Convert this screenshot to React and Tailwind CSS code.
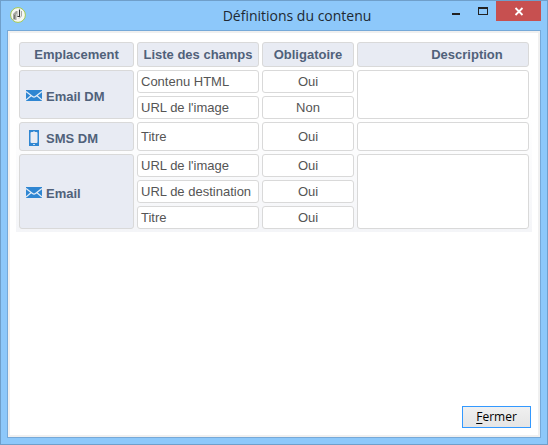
const groups = [
  {
    name: 'Email DM',
    icon: 'mail',
    fields: [
      ['Contenu HTML', 'Oui'],
      ['URL de l\'image', 'Non'],
    ],
  },
  { name: 'SMS DM', icon: 'phone', fields: [['Titre', 'Oui']] },
  {
    name: 'Email',
    icon: 'mail',
    fields: [
      ['URL de l\'image', 'Oui'],
      ['URL de destination', 'Oui'],
      ['Titre', 'Oui'],
    ],
  },
];

function MailIcon() {
  return (
    <svg className="mb-0.5 block h-[11px] w-4 shrink-0" viewBox="0 0 16 11" aria-hidden="true">
      <rect width="16" height="11" fill="#2f86d2" />
      <path d="M0 1.5 L6.5 6.6 Q8 7.8 9.5 6.6 L16 1.5 M0 10 L5 5.8 M16 10 L11 5.8" fill="none" stroke="#e3edf8" strokeWidth="1.3" />
    </svg>
  );
}

function PhoneIcon() {
  return (
    <svg className="mb-0.5 block h-4 w-4 shrink-0" viewBox="0 0 16 16" aria-hidden="true">
      <rect x="3" width="10" height="16" fill="#2f86d2" />
      <rect x="4.5" y="2" width="7" height="11" rx="1" fill="#e8ebf3" />
      <rect x="7" y="1" width="2" height="1" fill="#8fbce6" />
      <rect x="7" y="14" width="2" height="1" fill="#c5dcf2" />
    </svg>
  );
}

function AppIcon() {
  return (
    <svg className="block h-4 w-4" viewBox="0 0 16 16" aria-hidden="true">
      <circle cx="8" cy="8" r="7.4" fill="#f6f7f4" stroke="#a3c94f" strokeWidth="1" />
      <path d="M3 7 L6 4 H8 V6 L6.5 7 V13 L3 12.5 Z" fill="#a2a49f" />
      <path d="M4 8 H5 V12 H4 Z" fill="#777975" />
      <path d="M7 4 H8 V10 H7 Z" fill="#c9cac6" />
      <path d="M9.5 2.5 V9.5 M7.5 9.5 H10" fill="none" stroke="#333" strokeWidth="1.1" />
      <path d="M11.5 4 V9 L9 11.5" fill="none" stroke="#a9aba6" strokeWidth="1" />
    </svg>
  );
}

const head = 'h-[25px] rounded-[3px] border border-[#d9d9d9] bg-[#e8ebf3] p-0 text-center font-bold text-[#50617a]';
const cell = 'rounded-[3px] border border-[#d9d9d9] bg-white py-0';

export default function App() {
  return (
    <div className="flex h-screen flex-col border border-[#6f9fca] bg-[#8dc8fa] px-1.5 pb-1.5 font-['Liberation_Sans',Arial,sans-serif]">
      <header className="grid h-[29px] shrink-0 grid-cols-[1fr_auto_1fr] items-start">
        <div className="pt-1.5 pl-[3px]">
          <AppIcon />
        </div>
        <h1 className="pt-1 pl-[46px] font-['Open_Sans','Noto_Sans',sans-serif] text-[14px] leading-[22px] text-[#202832]">
          Définitions du contenu
        </h1>
        <div className="flex justify-end">
          <button type="button" aria-label="Réduire" className="h-5 w-[26px]">
            <svg className="h-5 w-[26px]" viewBox="0 0 26 20" aria-hidden="true">
              <rect x="8" y="12" width="8" height="2" fill="#222" />
            </svg>
          </button>
          <button type="button" aria-label="Agrandir" className="h-5 w-[26px]">
            <svg className="h-5 w-[26px]" viewBox="0 0 26 20" aria-hidden="true">
              <path d="M8 6 H18 V14 H8 Z M9 8 V13 H17 V8 Z" fill="#222" fillRule="evenodd" />
            </svg>
          </button>
          <button type="button" aria-label="Fermer la fenêtre" className="h-5 w-[45px] bg-[#c75050]">
            <svg className="h-5 w-[45px]" viewBox="0 0 45 20" aria-hidden="true">
              <path d="M19.5 7 L26.5 14 M26.5 7 L19.5 14" stroke="#fff" strokeWidth="1.8" />
            </svg>
          </button>
        </div>
      </header>

      <main className="flex min-h-0 flex-1 flex-col border border-[#76a9d8] bg-white">
        <div className="flex min-h-0 flex-1 flex-col justify-between border-2 border-[#f0f0f0] p-1.5">
          <table className="w-full table-fixed border-separate border-spacing-[3px] bg-linear-to-b from-white from-40% to-[#f4f5f8] text-[13px] leading-4 text-[#555]">
            <colgroup>
              <col className="w-[115px]" />
              <col className="w-[122px]" />
              <col className="w-[92px]" />
              <col />
            </colgroup>
            <thead>
              <tr>
                <th scope="col" className={head}>Emplacement</th>
                <th scope="col" className={head}>Liste des champs</th>
                <th scope="col" className={head}>Obligatoire</th>
                <th scope="col" className="h-[25px] rounded-[3px] border border-[#d9d9d9] bg-[#e8ebf3] py-0 pr-0 pl-12 text-center font-bold text-[#50617a]">
                  Description
                </th>
              </tr>
            </thead>
            <tbody>
              {groups.map((group) =>
                group.fields.map(([field, required], i) => (
                  <tr key={group.name + field} className={group.icon === 'phone' ? 'h-[29px]' : 'h-[23px]'}>
                    {i === 0 && (
                      <th
                        scope="rowgroup"
                        rowSpan={group.fields.length}
                        className="rounded-[3px] border border-[#d9d9d9] bg-[#e8ebf3] py-0 pr-0 pl-1.5 text-left font-bold text-[#50617a]"
                      >
                        <span className="flex items-center gap-1 pt-1">
                          {group.icon === 'mail' ? <MailIcon /> : <PhoneIcon />}
                          {group.name}
                        </span>
                      </th>
                    )}
                    <td className={cell + ' pl-[3px] whitespace-nowrap'}>{field}</td>
                    <td className={cell + ' px-0 text-center'}>{required}</td>
                    {i === 0 && <td rowSpan={group.fields.length} className={cell} />}
                  </tr>
                )),
              )}
            </tbody>
          </table>
          <footer className="flex justify-end pr-px pb-px">
            <button
              type="button"
              className="h-[22px] w-[69px] border border-[#3399ff] bg-linear-to-b from-[#f0f0f0] to-[#e5e5e5] font-['Open_Sans','Noto_Sans',sans-serif] text-[12px] leading-4 text-black"
            >
              <span className="underline underline-offset-2">F</span>ermer
            </button>
          </footer>
        </div>
      </main>
    </div>
  );
}
